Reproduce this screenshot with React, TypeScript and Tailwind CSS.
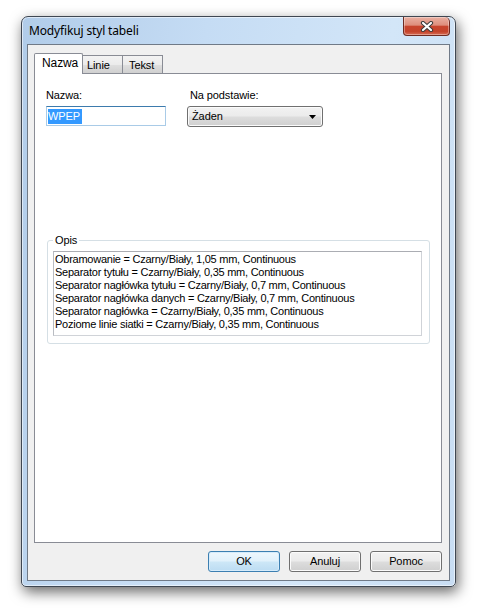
import React from 'react'

const ui = "font-['Liberation_Sans',Arial,sans-serif] text-[11px] leading-[13px] tracking-[-0.1px] text-black"

const opisLines = [
  'Obramowanie = Czarny/Biały, 1,05 mm, Continuous',
  'Separator tytułu = Czarny/Biały, 0,35 mm, Continuous',
  'Separator nagłówka tytułu = Czarny/Biały, 0,7 mm, Continuous',
  'Separator nagłówka danych = Czarny/Biały, 0,7 mm, Continuous',
  'Separator nagłówka = Czarny/Biały, 0,35 mm, Continuous',
  'Poziome linie siatki = Czarny/Biały, 0,35 mm, Continuous',
]

function CloseButton() {
  return (
    <button className="mr-[5px] flex h-[19px] w-[47px] items-center justify-center rounded-tr-[5px] rounded-b-[4px] border border-t-0 border-[#6e2b22] bg-[linear-gradient(#eab0a2_0%,#de8e7c_45%,#c8452e_52%,#c4432b_80%,#d66c55_100%)] shadow-[inset_0_0_0_1px_rgba(255,255,255,0.35)]">
      <svg width="14" height="11" viewBox="0 0 14 11">
        <path d="M3 2 L11 9 M11 2 L3 9" stroke="#3a3a3a" strokeWidth="4.2" strokeLinecap="round" />
        <path d="M3 2 L11 9 M11 2 L3 9" stroke="#ffffff" strokeWidth="2.2" strokeLinecap="round" />
      </svg>
    </button>
  )
}

function Button({ label, primary }: { label: string; primary?: boolean }) {
  return (
    <button
      className={`${ui} flex h-[21px] w-[72px] items-center justify-center rounded-[3px] border ${
        primary
          ? 'border-[#3c7fb1] bg-[linear-gradient(#eef7fd_0%,#e1f1fb_48%,#cde7f7_52%,#bcdcf2_100%)] shadow-[inset_0_0_0_1px_#d6ecfb]'
          : 'border-[#707070] bg-[linear-gradient(#f2f2f2_0%,#ebebeb_48%,#dddddd_52%,#cfcfcf_100%)] shadow-[inset_0_0_0_1px_#fbfbfb]'
      }`}
    >
      {label}
    </button>
  )
}

export default function App() {
  return (
    <div className="min-h-[611px] bg-white pl-[21px] pt-[16px]">
      <div className="flex h-[571px] w-[435px] flex-col rounded-t-[7px] rounded-b-[5px] border border-[#3f4752] bg-[linear-gradient(100deg,#b1cce9_0%,#c5dcf4_35%,#d3e6f8_70%,#c8ddf3_100%)] shadow-[inset_0_0_0_1px_rgba(255,255,255,0.55),2px_5px_14px_rgba(0,0,0,0.6)]">
        {/* title bar */}
        <div className="flex h-[27px] items-center justify-between">
          <span className="pl-[7px] font-['Noto_Sans',sans-serif] text-[12px] leading-[16px] tracking-[-0.15px] text-black">
            Modyfikuj styl tabeli
          </span>
          <div className="self-start">
            <CloseButton />
          </div>
        </div>

        {/* client */}
        <div className={`${ui} mx-[5px] mb-[5px] flex flex-1 flex-col border border-[#707a87] bg-[#f0f0f0] pt-[8px]`}>
          {/* tabs */}
          <div className="flex h-[20px] items-end pl-[6px]">
            <div className="relative z-10 -mb-px h-[21px] w-[49px] rounded-t-[2px] border border-b-0 border-[#898c95] bg-white pl-[7px] pt-[3px] text-[12px]">
              Nazwa
            </div>
            <div className="h-[18px] w-[40px] border border-b-0 border-l-0 border-[#898c95] bg-[linear-gradient(#f3f3f3_0%,#ebebeb_50%,#dedede_55%,#d0d0d0_100%)] pl-[4px] pt-[3px]">
              Linie
            </div>
            <div className="h-[18px] w-[40px] border border-b-0 border-l-0 border-[#898c95] bg-[linear-gradient(#f3f3f3_0%,#ebebeb_50%,#dedede_55%,#d0d0d0_100%)] pl-[6px] pt-[3px]">
              Tekst
            </div>
          </div>

          {/* tab panel */}
          <div className="ml-[6px] mr-[7px] h-[470px] border border-[#898c95] bg-white pl-[11px] pt-[15px]">
            <div className="flex gap-[21px]">
              <div className="w-[120px]">
                <div>Nazwa:</div>
                <div className="mt-[4px] flex h-[20px] items-center border border-[#a9cbe7] border-t-[#3d7bad] pl-px">
                  <span className="h-[15px] bg-[#3399ff] pr-[2px] leading-[15px] text-white">WPEP</span>
                </div>
              </div>
              <div>
                <div className="pl-[3px]">Na podstawie:</div>
                <div className="mt-[4px] flex h-[21px] w-[136px] items-center justify-between rounded-[3px] border border-[#707070] bg-[linear-gradient(#f2f2f2_0%,#ebebeb_48%,#dddddd_52%,#cfcfcf_100%)] pl-[4px] pr-[6px] shadow-[inset_0_0_0_1px_#fbfbfb]">
                  <span>Żaden</span>
                  <svg width="7" height="4" viewBox="0 0 7 4">
                    <path d="M0 0 H7 L3.5 4 Z" fill="#000" />
                  </svg>
                </div>
              </div>
            </div>

            <fieldset className="ml-px mt-[107px] w-[383px] rounded-[3px] border border-[#d5dfe5] pb-[7px]">
              <legend className="ml-[5px] px-[2px]">Opis</legend>
              <div className="ml-[5px] mr-[7px] mt-[4px] h-[85px] border border-[#d0d3d8] border-t-[#abadb3] border-l-[#b9bcc2] pl-[1px] pt-[1px] tracking-[-0.25px]">
                {opisLines.map((line) => (
                  <div key={line} className="whitespace-nowrap">
                    {line}
                  </div>
                ))}
              </div>
            </fieldset>
          </div>

          {/* buttons */}
          <div className="mt-[8px] flex justify-end gap-[9px] pr-[7px]">
            <Button label="OK" primary />
            <Button label="Anuluj" />
            <Button label="Pomoc" />
          </div>
        </div>
      </div>
    </div>
  )
}
